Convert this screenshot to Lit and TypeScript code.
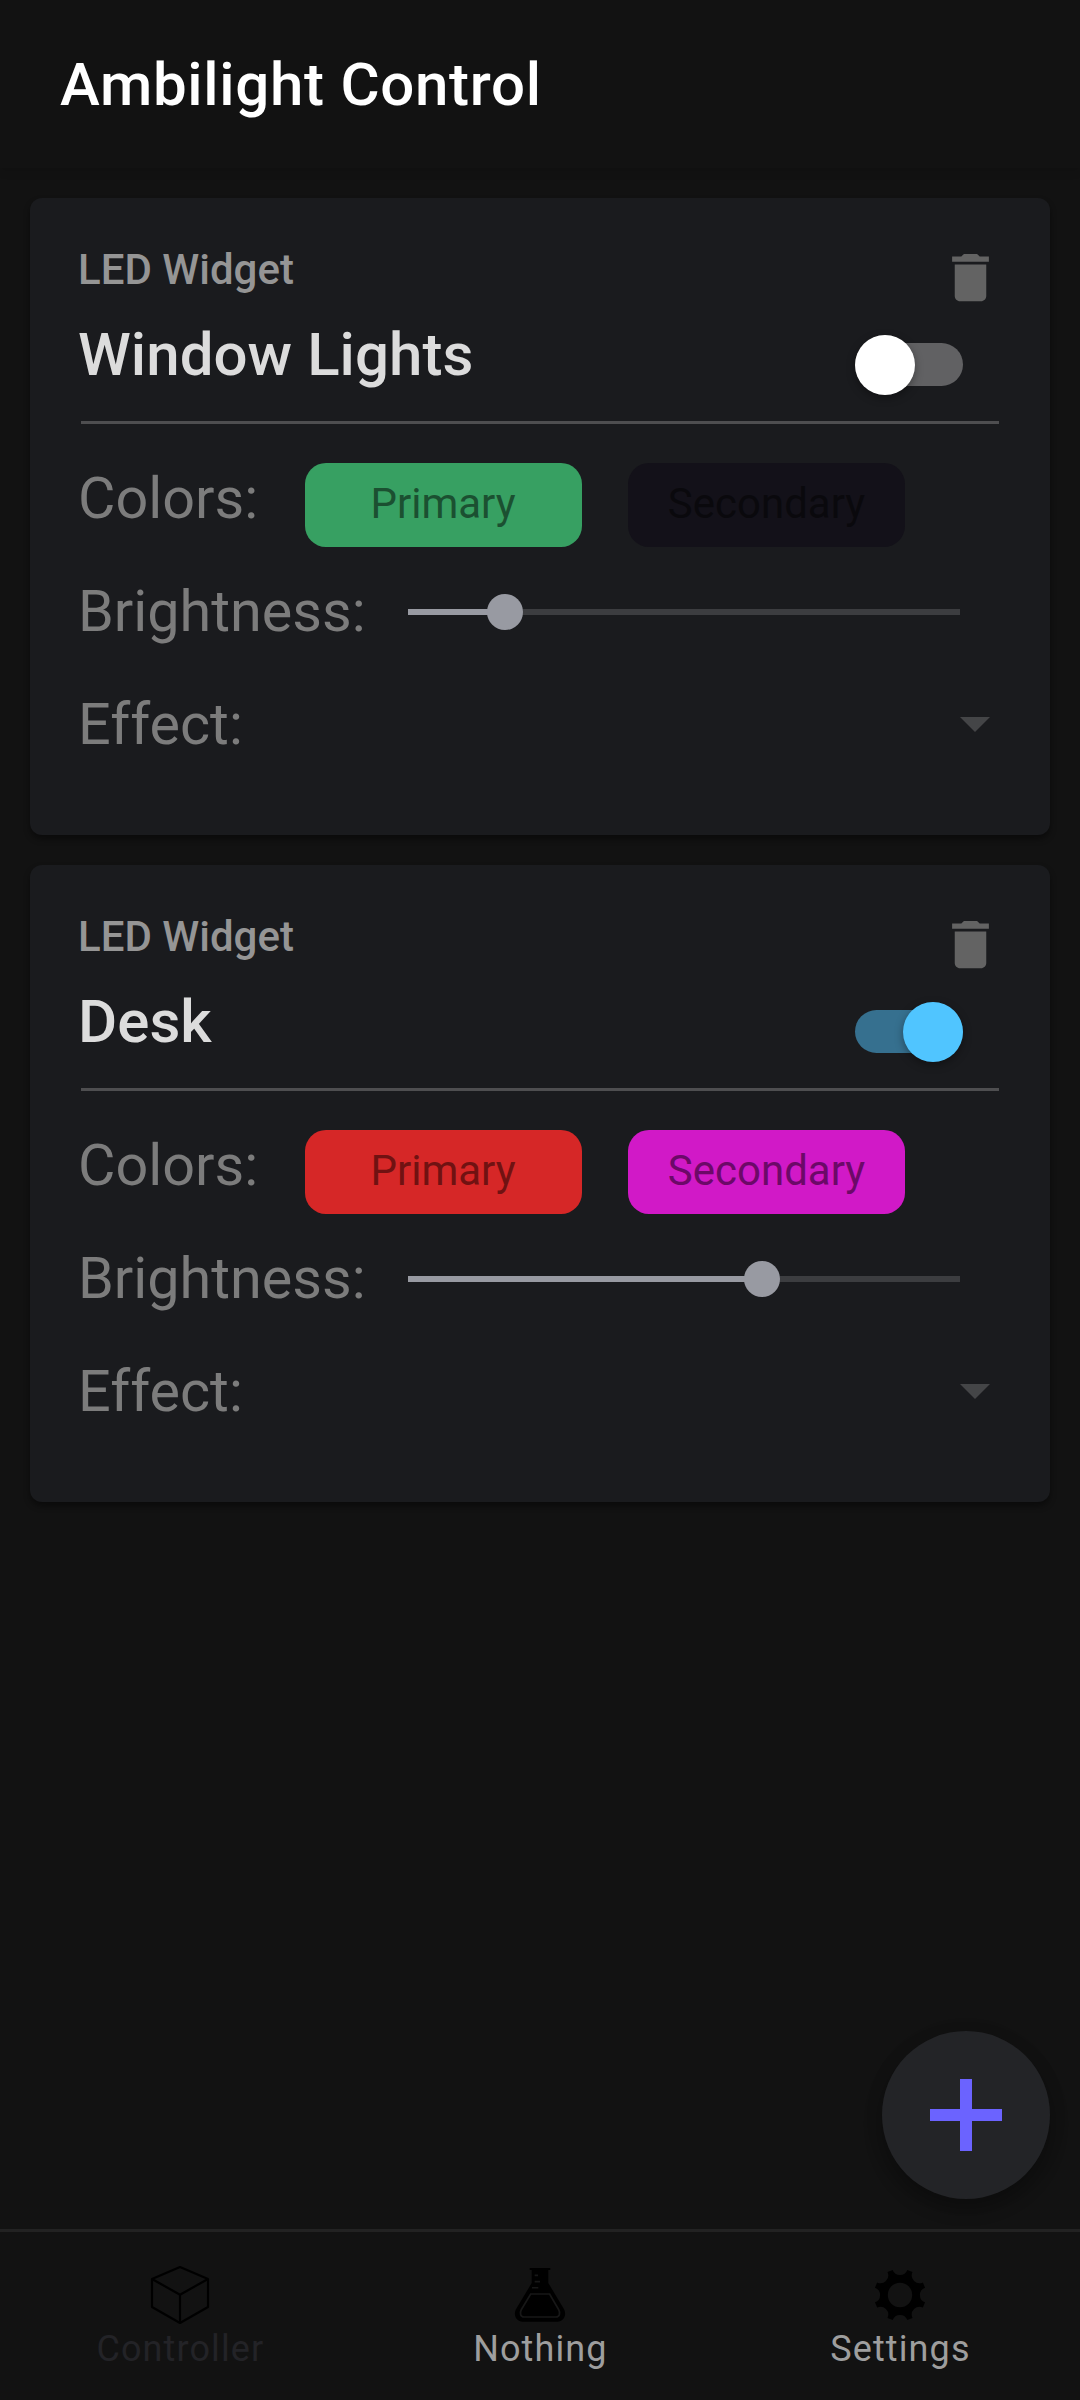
import { LitElement, html, svg, css } from "lit";
import { customElement, property } from "lit/decorators.js";
import { classMap } from "lit/directives/class-map.js";

interface Widget {
  name: string;
  on: boolean;
  primary: string;
  primaryText: string;
  secondary: string;
  secondaryText: string;
  brightness: number;
}

const WIDGETS: Widget[] = [
  {
    name: "Window Lights",
    on: false,
    primary: "#37a062",
    primaryText: "#1b5031",
    secondary: "#131119",
    secondaryText: "#0a090d",
    brightness: 17.6,
  },
  {
    name: "Desk",
    on: true,
    primary: "#d62727",
    primaryText: "#701212",
    secondary: "#d119c7",
    secondaryText: "#6c0968",
    brightness: 64.1,
  },
];

/* Eight-toothed cog: straight tooth tips joined by concave arcs. */
function gearPath(): string {
  const c = 30;
  const r = 26.1;
  const half = 16.3;
  const at = (deg: number) => {
    const a = (deg * Math.PI) / 180;
    return `${(c + r * Math.sin(a)).toFixed(2)} ${(c - r * Math.cos(a)).toFixed(2)}`;
  };
  let d = `M${at(-half)}`;
  for (let i = 0; i < 8; i++) {
    d += `A7.8 7.8 0 0 0 ${at(i * 45 + half)}L${at((i + 1) * 45 - half)}`;
  }
  return d + "ZM42.2 30A12.2 12.2 0 1 0 17.8 30A12.2 12.2 0 1 0 42.2 30Z";
}

const ICONS = {
  cube: svg`
    <path d="M30 2L58 14V42L30 58L2 42V14ZM2 14L30 29.7L58 14M30 29.7V58"
      fill="none" stroke="#000" stroke-width="2.2" stroke-linejoin="round" />`,
  flask: svg`
    <path d="M19.7 3H40.3V5H38.3V18L53.6 43.5C57.5 50 53.5 56.7 47.5 56.7H12.5C6.5 56.7 2.5 50 6.4 43.5L21.7 18V5H19.7Z" fill="#000" />
    <path d="M20.7 29H39.6L48.6 44.5C50.8 48.5 49.3 52 46 52H14C10.7 52 9.2 48.5 11.4 44.5Z"
      fill="none" stroke="#171717" stroke-width="1.7" />
    <path d="M24.7 10.4H28M24.7 16.6H30M22 22.8H28.3" stroke="#171717" stroke-width="1.6" />`,
  gear: svg`<path d=${gearPath()} fill="#000" fill-rule="evenodd" />`,
};

@customElement("led-card")
export class LedCard extends LitElement {
  @property({ attribute: false }) widget!: Widget;

  static styles = css`
    :host {
      display: block;
      box-sizing: border-box;
      height: 637px;
      border-radius: 12px;
      background: #1a1b1e;
      box-shadow: 0 4px 6px rgba(0, 0, 0, 0.42);
    }
    .head {
      display: flex;
      justify-content: space-between;
      box-sizing: border-box;
      height: 223px;
      padding: 47px 48px 0;
    }
    .kind {
      font-size: 42px;
      font-weight: 500;
      line-height: 50px;
      color: #959595;
    }
    .name {
      margin-top: 25px;
      font-size: 60px;
      font-weight: 500;
      line-height: 70px;
      letter-spacing: 0.05px;
      color: #dcdcdc;
    }
    .actions {
      display: flex;
      flex-direction: column;
      align-items: flex-end;
      padding-top: 1px;
    }
    .trash {
      width: 63px;
      height: 63px;
      fill: #636363;
    }
    .switch {
      display: flex;
      align-items: center;
      width: 108px;
      height: 43px;
      margin: 34px 39px 0 0;
      border-radius: 22px;
      background: #616163;
    }
    .thumb {
      width: 60px;
      height: 60px;
      border-radius: 50%;
      background: #fff;
      box-shadow: 0 3px 9px rgba(0, 0, 0, 0.35);
      flex: none;
    }
    .switch.on {
      justify-content: flex-end;
      background: #36708f;
    }
    .switch.on .thumb {
      background: #50c5ff;
    }
    .rule {
      height: 3px;
      margin: 0 51px 18px;
      background: #4e4e50;
    }
    .row {
      display: flex;
      align-items: center;
      padding: 0 60px 0 48px;
      font-size: 57.5px;
      line-height: 68px;
      color: #7c7c7c;
    }
    .colors {
      height: 113px;
    }
    .bright {
      height: 114px;
    }
    .effect {
      height: 112px;
      justify-content: space-between;
    }
    .colors .label {
      width: 227px;
    }
    .bright .label {
      width: 330px;
    }
    .chip {
      box-sizing: border-box;
      width: 277px;
      height: 84px;
      margin: 13px 46px 0 0;
      padding: 0 0 3px;
      border-radius: 21px;
      font-size: 42px;
      line-height: 81px;
      text-align: center;
    }
    .chip.first {
      padding-right: 1px;
    }
    .slider {
      display: flex;
      align-items: center;
      width: 552px;
      height: 36px;
    }
    .filled {
      height: 6px;
      background: #989aa2;
    }
    .knob {
      width: 36px;
      height: 36px;
      margin: 0 -18px;
      border-radius: 50%;
      background: #989aa2;
      flex: none;
      z-index: 1;
    }
    .rest {
      flex: 1;
      height: 6px;
      background: #3c3d40;
    }
    .caret {
      width: 30px;
      height: 15px;
      margin-bottom: 2px;
      fill: #444547;
    }
  `;

  render() {
    const w = this.widget;
    return html`
      <div class="head">
        <div>
          <div class="kind">LED Widget</div>
          <div class="name">${w.name}</div>
        </div>
        <div class="actions">
          <svg class="trash" viewBox="0 0 24 24">
            <path d="M6 19c0 1.1.9 2 2 2h8c1.1 0 2-.9 2-2V7H6v12zM19 4h-3.5l-1-1h-5l-1 1H5v2h14V4z" />
          </svg>
          <div class=${classMap({ switch: true, on: w.on })}><div class="thumb"></div></div>
        </div>
      </div>
      <div class="rule"></div>
      <div class="row colors">
        <div class="label">Colors:</div>
        <div class="chip first" style="background:${w.primary};color:${w.primaryText}">Primary</div>
        <div class="chip" style="background:${w.secondary};color:${w.secondaryText}">Secondary</div>
      </div>
      <div class="row bright">
        <div class="label">Brightness:</div>
        <div class="slider">
          <div class="filled" style="width:${w.brightness}%"></div>
          <div class="knob"></div>
          <div class="rest"></div>
        </div>
      </div>
      <div class="row effect">
        <div class="label">Effect:</div>
        <svg class="caret" viewBox="0 0 30 15"><path d="M0 0H30L15 15Z" /></svg>
      </div>
    `;
  }
}

@customElement("app-root")
export class AppRoot extends LitElement {
  static styles = css`
    :host {
      display: flex;
      flex-direction: column;
      position: relative;
      box-sizing: border-box;
      width: 1080px;
      height: 2400px;
      overflow: hidden;
      background: #121212;
      font-family: Roboto, "Liberation Sans", sans-serif;
    }
    .bar {
      display: flex;
      align-items: center;
      height: 168px;
      padding: 1px 60px 0;
      box-sizing: border-box;
      background: #121212;
      box-shadow: 0 3px 9px rgba(0, 0, 0, 0.12);
      font-size: 60px;
      font-weight: 500;
      letter-spacing: 0.7px;
      color: #fff;
    }
    .list {
      flex: 1;
      display: flex;
      flex-direction: column;
      gap: 30px;
      padding: 30px;
    }
    .fab {
      position: absolute;
      right: 30px;
      bottom: 201px;
      display: flex;
      align-items: center;
      justify-content: center;
      width: 168px;
      height: 168px;
      border-radius: 50%;
      background: #232427;
      box-shadow: 0 9px 18px rgba(0, 0, 0, 0.28), 0 2px 18px rgba(0, 0, 0, 0.1);
    }
    .plus {
      width: 72px;
      height: 72px;
      fill: #6b63ff;
    }
    .nav {
      display: flex;
      box-sizing: border-box;
      height: 171px;
      border-top: 3px solid #222;
    }
    .tab {
      flex: 1;
      display: flex;
      flex-direction: column;
      align-items: center;
      gap: 4px;
      padding-top: 33px;
      font-size: 36px;
      line-height: 40px;
      letter-spacing: 1.12px;
      color: #9e9e9e;
    }
    .tab span {
      padding-left: 0.8px;
    }
    .tab.active {
      color: #232327;
    }
    .icon {
      width: 60px;
      height: 60px;
    }
  `;

  render() {
    return html`
      <div class="bar">Ambilight Control</div>
      <div class="list">${WIDGETS.map((w) => html`<led-card .widget=${w}></led-card>`)}</div>
      <div class="nav">
        <div class="tab active"><svg class="icon" viewBox="0 0 60 60">${ICONS.cube}</svg><span>Controller</span></div>
        <div class="tab"><svg class="icon" viewBox="0 0 60 60">${ICONS.flask}</svg><span>Nothing</span></div>
        <div class="tab"><svg class="icon" viewBox="0 0 60 60">${ICONS.gear}</svg><span>Settings</span></div>
      </div>
      <div class="fab">
        <svg class="plus" viewBox="0 0 72 72"><path d="M30 0H42V30H72V42H42V72H30V42H0V30H30Z" /></svg>
      </div>
    `;
  }
}
